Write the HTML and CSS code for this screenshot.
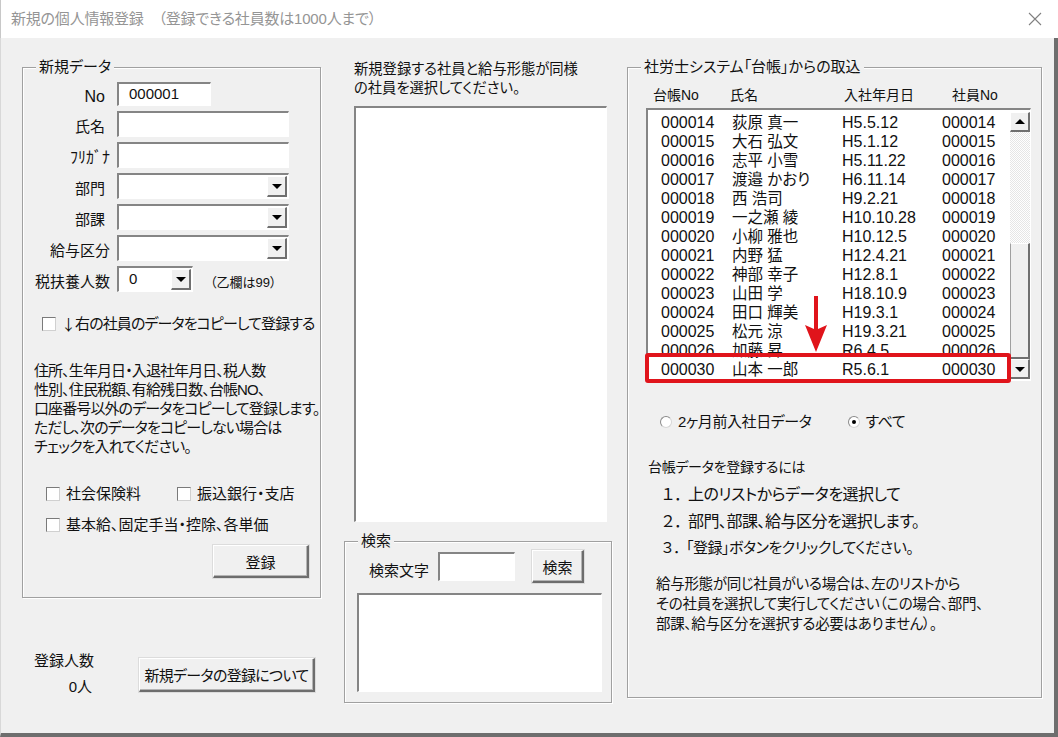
FILE: index.html
```html
<!DOCTYPE html>
<html>
<head>
    <meta charset="UTF-8">
    <title>新規の個人情報登録</title>
    <link rel="stylesheet" href="styles.css">
</head>
<body>
    <div class="window">
        <div class="titlebar">
            <span class="title">新規の個人情報登録　（登録できる社員数は1000人まで）</span>
            <svg class="close" width="14" height="14" viewBox="0 0 14 14"><path d="M1 1L13 13M13 1L1 13" stroke="#808080" stroke-width="1.1" fill="none"/></svg>
        </div>
        <div class="client">
            <!-- 左：新規データ -->
            <div class="col-left">
                <fieldset class="frame frame-new">
                    <legend>新規データ</legend>
                    <div class="form-grid">
                        <span class="lbl lbl-no">No</span>
                        <div class="field field-no">000001</div>
                        <span class="lbl">氏名</span>
                        <div class="field"></div>
                        <span class="lbl lbl-long lbl-kana">ﾌﾘｶﾞﾅ</span>
                        <div class="field"></div>
                        <span class="lbl">部門</span>
                        <div class="field combo"><span class="drop"></span></div>
                        <span class="lbl">部課</span>
                        <div class="field combo"><span class="drop"></span></div>
                        <span class="lbl lbl-long">給与区分</span>
                        <div class="field combo"><span class="drop"></span></div>
                        <span class="lbl lbl-long">税扶養人数</span>
                        <div class="dep-row">
                            <div class="field combo combo-small">0<span class="drop"></span></div>
                            <span class="note">（乙欄は99）</span>
                        </div>
                    </div>
                    <div class="check-row copy-row"><span class="check"></span><span class="down">↓</span>右の社員のデータをコピーして登録する</div>
                    <p class="copy-note">住所、生年月日・入退社年月日、税人数<br>性別、住民税額、有給残日数、台帳NO、<br>口座番号以外のデータをコピーして登録します。<br>ただし、次のデータをコピーしない場合は<br>チェックを入れてください。</p>
                    <div class="check-grid">
                        <div class="check-row"><span class="check"></span>社会保険料</div>
                        <div class="check-row"><span class="check"></span>振込銀行・支店</div>
                        <div class="check-row wide"><span class="check"></span>基本給、固定手当・控除、各単価</div>
                    </div>
                    <div class="btn-row"><button class="btn btn-register">登録</button></div>
                </fieldset>
                <div class="count-row">
                    <div class="count">
                        <div>登録人数</div>
                        <div class="count-val">0人</div>
                    </div>
                    <button class="btn btn-about">新規データの登録について</button>
                </div>
            </div>

            <!-- 中：同様の社員 / 検索 -->
            <div class="col-mid">
                <p class="mid-note">新規登録する社員と給与形態が同様<br>の社員を選択してください。</p>
                <div class="listbox same-list"></div>
                <fieldset class="frame frame-search">
                    <legend>検索</legend>
                    <div class="search-row">
                        <span class="search-lbl">検索文字</span>
                        <div class="field search-input"></div>
                        <button class="btn btn-search">検索</button>
                    </div>
                    <div class="listbox search-list"></div>
                </fieldset>
            </div>

            <!-- 右：台帳からの取込 -->
            <fieldset class="frame frame-import">
                <legend>社労士システム「台帳」からの取込</legend>
                <div class="ledger-head">
                    <span>台帳No</span><span>氏名</span><span>入社年月日</span><span>社員No</span>
                </div>
                <div class="ledger-wrap">
                    <div class="listbox ledger">
                        <div class="ledger-rows">
                            <div class="row"><span>000014</span><span>荻原 真一</span><span>H5.5.12</span><span>000014</span></div>
                            <div class="row"><span>000015</span><span>大石 弘文</span><span>H5.1.12</span><span>000015</span></div>
                            <div class="row"><span>000016</span><span>志平 小雪</span><span>H5.11.22</span><span>000016</span></div>
                            <div class="row"><span>000017</span><span>渡邉 かおり</span><span>H6.11.14</span><span>000017</span></div>
                            <div class="row"><span>000018</span><span>西 浩司</span><span>H9.2.21</span><span>000018</span></div>
                            <div class="row"><span>000019</span><span>一之瀬 綾</span><span>H10.10.28</span><span>000019</span></div>
                            <div class="row"><span>000020</span><span>小柳 雅也</span><span>H10.12.5</span><span>000020</span></div>
                            <div class="row"><span>000021</span><span>内野 猛</span><span>H12.4.21</span><span>000021</span></div>
                            <div class="row"><span>000022</span><span>神部 幸子</span><span>H12.8.1</span><span>000022</span></div>
                            <div class="row"><span>000023</span><span>山田 学</span><span>H18.10.9</span><span>000023</span></div>
                            <div class="row"><span>000024</span><span>田口 輝美</span><span>H19.3.1</span><span>000024</span></div>
                            <div class="row"><span>000025</span><span>松元 涼</span><span>H19.3.21</span><span>000025</span></div>
                            <div class="row"><span>000026</span><span>加藤 昇</span><span>R6.4.5</span><span>000026</span></div>
                            <div class="row"><span>000030</span><span>山本 一郎</span><span>R5.6.1</span><span>000030</span></div>
                        </div>
                        <div class="vscroll">
                            <div class="sb-btn sb-up"></div>
                            <div class="sb-track"><div class="sb-thumb"></div></div>
                            <div class="sb-btn sb-down"></div>
                        </div>
                    </div>
                    <svg class="mark-arrow" width="22" height="56" viewBox="0 0 22 56"><path d="M9 0H13V33L22 29L11 56L0 29L9 33Z" fill="#e0141b"/></svg>
                    <div class="mark-box"></div>
                </div>
                <div class="radio-row">
                    <span class="radio-item"><span class="radio"></span>2ヶ月前入社日データ</span>
                    <span class="radio-item radio-all"><span class="radio on"></span>すべて</span>
                </div>
                <p class="steps-title">台帳データを登録するには</p>
                <ol class="steps">
                    <li><span class="num">１．</span>上のリストからデータを選択して</li>
                    <li><span class="num">２．</span>部門、部課、給与区分を選択します。</li>
                    <li class="small"><span class="num">３．</span>「登録」ボタンをクリックしてください。</li>
                </ol>
                <p class="import-note">給与形態が同じ社員がいる場合は、左のリストから<br>その社員を選択して実行してください（この場合、部門、<br>部課、給与区分を選択する必要はありません）。</p>
            </fieldset>
        </div>
    </div>
</body>
</html>
```

FILE: styles.css
```css
body{margin:0;font-family:"Liberation Sans","Noto Sans CJK JP",sans-serif;font-feature-settings:"palt";color:#111;background:#f0f0f0;}
p,ol,li{margin:0;padding:0;list-style:none;}
button{font-family:inherit;font-feature-settings:"palt";color:inherit;cursor:pointer;}

.window{
    width: 1058px;
    height: 737px;
    display: flex;
    flex-direction: column;
    overflow: hidden;
}

.titlebar{
    height: 38px;
    flex-shrink: 0;
    display: flex;
    align-items: center;
    justify-content: space-between;
    padding: 0 16px 0 10px;
    background-color: #ffffff;
    border-left: 1px solid #c8c8c8;
    box-sizing: border-box;
}
.titlebar .title{
    font-size: 15px;
    color: #959595;
    line-height: 20px;
    letter-spacing: -0.2px;
}

.client{
    flex: 1;
    display: flex;
    align-items: flex-start;
    padding: 20px 0 0 21px;
    background-color: #f0f0f0;
    border-left: 1px solid #d8d8d8;
    border-right: 4px solid #6e6e6e;
    border-bottom: 4px solid #6e6e6e;
    font-size: 15px;
    line-height: 19px;
}

/* 枠（グループボックス） */
.frame{
    margin: 0;
    padding: 0;
    min-width: 0;
    border: 1px solid #a0a0a0;
    box-shadow: inset 1px 1px 0 #ffffff, 1px 1px 0 #ffffff;
    box-sizing: border-box;
}
.frame legend{
    margin-left: 13px;
    padding: 0 3px;
    font-size: 15px;
    line-height: 18px;
    background-color: #f0f0f0;
}

/* 入力欄 */
.field{
    position: relative;
    height: 26px;
    background-color: #ffffff;
    border-style: solid;
    border-width: 2px 1px 1px 2px;
    border-color: #858585 #ffffff #ffffff #858585;
    box-sizing: border-box;
    padding: 0 10px;
    font-size: 15px;
    line-height: 22px;
}
.combo .drop{
    position: absolute;
    top: 1px;
    right: 1px;
    width: 20px;
    height: 21px;
    background-color: #f0f0f0;
    border-style: solid;
    border-width: 1px 2px 2px 1px;
    border-color: #ffffff #707070 #707070 #ffffff;
    box-sizing: border-box;
}
.combo .drop::after{
    content: "";
    position: absolute;
    left: 4px;
    top: 7px;
    border-left: 5px solid transparent;
    border-right: 5px solid transparent;
    border-top: 5px solid #000000;
}

.btn{
    background-color: #f0f0f0;
    border-style: solid;
    border-width: 1px 2px 2px 1px;
    border-color: #ffffff #6d6d6d #6d6d6d #ffffff;
    box-shadow: inset -1px -1px 0 #b4b4b4, 0 0 0 1px #dcdcdc;
    box-sizing: border-box;
    padding: 0;
    font-size: 15px;
}

.check{
    display: inline-block;
    width: 14px;
    height: 14px;
    background-color: #ffffff;
    border: 1px solid;
    border-color: #7a7a7a #d0d0d0 #d0d0d0 #7a7a7a;
    box-sizing: border-box;
    margin-right: 8px;
    flex-shrink: 0;
}
.check-row{
    display: flex;
    align-items: center;
    height: 19px;
    white-space: nowrap;
}

.listbox{
    background-color: #ffffff;
    border-style: solid;
    border-width: 2px 1px 1px 2px;
    border-color: #858585 #ffffff #ffffff #858585;
    box-sizing: border-box;
}

/* 左カラム */
.col-left{
    width: 299px;
    flex-shrink: 0;
}
.frame-new{
    width: 299px;
    padding: 6px 0 19px 0;
}
.form-grid{
    display: grid;
    grid-template-columns: 88px 172px;
    column-gap: 6px;
    row-gap: 5px;
}
.lbl{
    text-align: right;
    align-self: center;
    padding: 5px 6px 0 0;
    line-height: 19px;
    white-space: nowrap;
}
.lbl-long{padding-right: 1px;}
.lbl-kana{font-size: 16px;}
.lbl-no{font-size: 16px;}
.field-no{
    width: 94px;
    height: 24px;
    line-height: 20px;
    font-size: 15px;
}
.dep-row{
    display: flex;
    align-items: center;
}
.combo-small{
    width: 76px;
}
.dep-row .note{
    margin-left: 17px;
    padding-top: 6px;
    font-size: 13px;
}
.copy-row{
    margin: 22px 0 0 19px;
    letter-spacing: -0.9px;
}
.copy-row .down{
    font-family: "Noto Sans CJK JP", sans-serif;
    font-feature-settings: normal;
    letter-spacing: 0;
    margin: 0 -1px 0 -3px;
}
.copy-note{
    margin: 28px 0 0 11px;
    line-height: 19px;
    letter-spacing: -0.9px;
    white-space: nowrap;
}
.check-grid{
    display: grid;
    grid-template-columns: 131px auto;
    row-gap: 12px;
    margin: 28px 0 0 23px;
}
.check-grid .wide{
    grid-column: 1 / 3;
}
.check-grid .check{margin-right: 6px;}
.btn-row{
    display: flex;
    justify-content: flex-end;
    margin: 11px 11px 0 0;
}
.btn-register{
    width: 96px;
    height: 33px;
}
.count-row{
    display: flex;
    align-items: flex-start;
    justify-content: space-between;
    margin: 53px 6px 0 12px;
}
.count{
    line-height: 26px;
    margin-top: -3px;
}
.count-val{
    text-align: right;
    padding-right: 2px;
}
.btn-about{
    width: 176px;
    height: 34px;
    margin-top: 7px;
    letter-spacing: -0.7px;
}

/* 中カラム */
.col-mid{
    width: 268px;
    margin-left: 23px;
    flex-shrink: 0;
}
.mid-note{
    margin: 2px 0 0 10px;
    font-size: 14.3px;
    line-height: 19px;
}
.same-list{
    width: 253px;
    height: 416px;
    margin: 8px 0 0 10px;
}
.frame-search{
    width: 268px;
    margin-top: 10px;
    padding: 0 0 10px 0;
}
.search-row{
    display: flex;
    align-items: center;
    padding-left: 24px;
}
.search-lbl{
    padding-top: 7px;
}
.search-input{
    width: 77px;
    height: 29px;
    margin-left: 9px;
}
.btn-search{
    width: 52px;
    height: 33px;
    margin-left: 17px;
}
.search-list{
    width: 245px;
    height: 99px;
    margin: 10px 0 0 12px;
}

/* 右カラム */
.frame-import{
    width: 415px;
    height: 640px;
    margin-left: 15px;
    padding-top: 10px;
}
.ledger-head{
    display: grid;
    grid-template-columns: 77px 114px 108px auto;
    padding-left: 25px;
    font-size: 14px;
    line-height: 19px;
}
.ledger-wrap{
    position: relative;
    margin: 3px 0 0 18px;
}
.ledger{
    display: flex;
    width: 385px;
    height: 273px;
}
.ledger-rows{
    flex: 1;
    overflow: hidden;
    padding-top: 3px;
}
.ledger .row{
    display: grid;
    grid-template-columns: 71px 110px 100px auto;
    padding-left: 13px;
    height: 19px;
    font-size: 16px;
    line-height: 19px;
    white-space: nowrap;
}
.ledger .row span:nth-child(2){
    font-size: 15.5px;
}
.vscroll{
    width: 20px;
    display: flex;
    flex-direction: column;
    padding: 2px 0 1px 0;
}
.sb-btn{
    position: relative;
    height: 20px;
    background-color: #f0f0f0;
    border-style: solid;
    border-width: 1px 2px 2px 1px;
    border-color: #ffffff #707070 #707070 #ffffff;
    box-sizing: border-box;
}
.sb-btn::after{
    content: "";
    position: absolute;
    left: 4px;
    border-left: 5px solid transparent;
    border-right: 5px solid transparent;
}
.sb-up::after{
    top: 6px;
    border-bottom: 5px solid #000000;
}
.sb-down::after{
    top: 7px;
    border-top: 5px solid #000000;
}
.sb-track{
    flex: 1;
    display: flex;
    flex-direction: column;
    justify-content: flex-end;
    background: repeating-conic-gradient(#ffffff 0 25%, #e6e6e6 0 50%) 0 0/2px 2px;
}
.sb-thumb{
    height: 116px;
    background-color: #f0f0f0;
    border-style: solid;
    border-width: 1px 2px 2px 1px;
    border-color: #ffffff #707070 #707070 #a0a0a0;
    box-sizing: border-box;
}
.mark-box{
    position: absolute;
    left: -1px;
    top: 245px;
    width: 366px;
    height: 30px;
    border: 4px solid #e0141b;
    border-radius: 3px;
    box-sizing: border-box;
}
.mark-arrow{
    position: absolute;
    left: 159px;
    top: 188px;
}
.radio-row{
    display: flex;
    margin: 31px 0 0 32px;
    font-size: 15px;
    letter-spacing: -0.4px;
}
.radio-item{
    display: flex;
    align-items: center;
}
.radio-all{
    margin-left: 36px;
}
.radio{
    position: relative;
    width: 12px;
    height: 12px;
    border-radius: 50%;
    background-color: #ffffff;
    border: 1px solid;
    border-color: #8a8a8a #d6d6d6 #d6d6d6 #8a8a8a;
    box-sizing: border-box;
    margin-right: 6px;
}
.radio.on::after{
    content: "";
    position: absolute;
    left: 3px;
    top: 3px;
    width: 4px;
    height: 4px;
    border-radius: 50%;
    background-color: #000000;
}
.steps-title{
    margin: 27px 0 0 20px;
    font-size: 14px;
    letter-spacing: -0.3px;
}
.steps{
    margin: 5px 0 0 32px;
}
.steps li{
    height: 26.5px;
    line-height: 26.5px;
    font-size: 16px;
    letter-spacing: -0.5px;
    white-space: nowrap;
}
.steps li.small{
    font-size: 15px;
}
.steps .num{
    font-feature-settings: normal;
    letter-spacing: -2px;
}
.import-note{
    margin: 12px 0 0 28px;
    font-size: 14.5px;
    line-height: 20px;
    letter-spacing: -0.3px;
    white-space: nowrap;
}
```
